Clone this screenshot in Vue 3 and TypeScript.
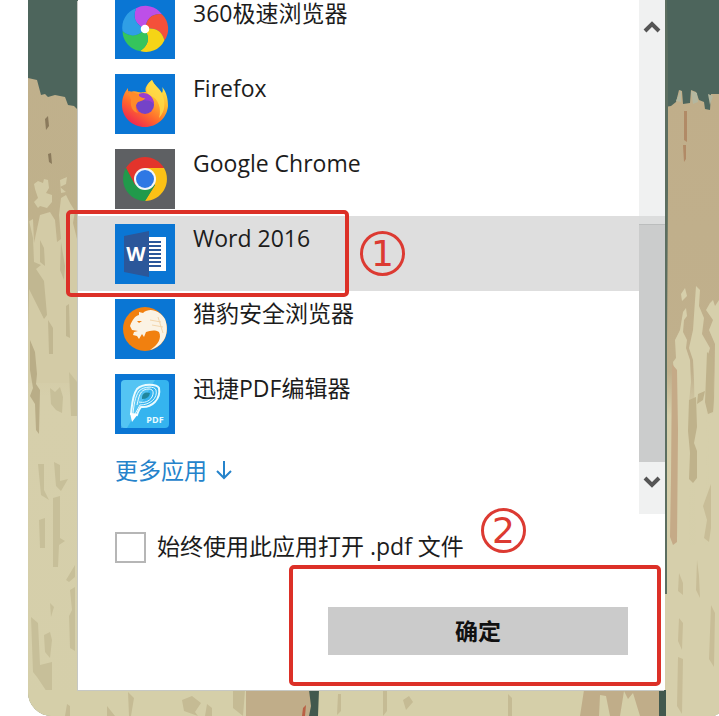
<script setup lang="ts">
import { ref } from 'vue'

type AppKind = 'swirl' | 'firefox' | 'chrome' | 'word' | 'cheetah' | 'pdf'

interface AppEntry {
  kind: AppKind
  name: string
}

const apps: AppEntry[] = [
  { kind: 'swirl', name: '360极速浏览器' },
  { kind: 'firefox', name: 'Firefox' },
  { kind: 'chrome', name: 'Google Chrome' },
  { kind: 'word', name: 'Word 2016' },
  { kind: 'cheetah', name: '猎豹安全浏览器' },
  { kind: 'pdf', name: '迅捷PDF编辑器' },
]

const petals = ['#bd4fe8', '#f4503a', '#f5d416', '#35c45c', '#2f9fe6']
const pageLines = [18, 22, 26, 30, 34, 38, 42]

const selected = ref<AppKind>('word')
const always = ref(false)
</script>

<template>
  <main class="stage">
    <svg class="scene" viewBox="28 0 691 716" preserveAspectRatio="xMidYMid slice" aria-hidden="true">
      <defs>
        <linearGradient id="wood" x1="0" y1="0" x2="0" y2="1">
          <stop offset="0" stop-color="#c0b08c" />
          <stop offset="0.22" stop-color="#bfb18b" />
          <stop offset="0.36" stop-color="#cdc39c" />
          <stop offset="0.5" stop-color="#d6cfab" />
          <stop offset="1" stop-color="#d5cfaa" />
        </linearGradient>
        <linearGradient id="plank" x1="0" y1="0" x2="0" y2="1">
          <stop offset="0" stop-color="#c0ae8a" />
          <stop offset="0.45" stop-color="#c0b08c" />
          <stop offset="0.52" stop-color="#d6cfab" />
          <stop offset="1" stop-color="#d5cfaa" />
        </linearGradient>
      </defs>
      <rect x="28" width="691" height="716" fill="#4d655c" />
      <path fill="url(#wood)" d="M28 78L37 80 41 95 45 94 48 97 55 95 65 97 68 105 74 106 78 110V716H28Z" />
      <path fill="#d3cba6" d="M34 184l4-3 5 2 1-4 4 1 1 8-3 5 6 2v7l-5 6-7-2-2 2-4-6 4-4-3-9zM60 180l7-3-1 7-6 3 6 5-5 1zM61 198l5-3 4 8 5 8-2 12 5 20v140H28V222l5-3 1 24 6-28 10-3 5 8 2 22 4-3-2-24z" />
      <path fill="#7d6d50" opacity="0.8" d="M45 119l3-3 1 10-3 4zM48 154l3-1 1 11-3-2z" />
      <g fill="#c1b791">
        <path d="M28 216l5 22 1 24 7 3-5 4 8 12 3 34-3 4-6-12-9-18-1 40z" />
        <path d="M40 240l4 8 1 18-5-4zM61 242l4 24-1 14-4-10zM66 306l3-2 1 34-4-2zM48 320l5 8v26h-4z" />
      </g>
      <path fill="#b9ad87" d="M30 340l5 12 2 22-1 10 4 6-1 44-3-4-1-26-5-8 3-8-3-18z" />
      <g fill="#c7bf99">
        <path d="M50 388l5 4 5-5 3 10-1 16-6-3-5-6zM69 372l8 10v34h-6zM38 464h6v26l5 10-8-5zM54 462l6 3v16l8-2-7 12-5-5z" />
        <path d="M53 498l7-2v42l5 3-6 4-1 22h-5zM39 520l6-2v30h-5zM66 580l9-15v12l-6 5zM70 590l5-3v64l-5-3-1-32 3-6z" />
        <path d="M31 617l7 6 2 42 12-3v36l-5-6-10-15-4-5zM44 635l6-3 2 8-2 18-5-6zM50 603l4 4-3 10z" />
      </g>
      <path fill="url(#plank)" d="M665 107l6-1 5-4 3-12 3 1 1 13 7-1 1-13 5 2 3 8 5 2 1 7 5 1 1-16h13V716H665Z" />
      <path fill="#b4b79f" d="M676 101l5-11v12zM691 91l6 2 1 9-5 2zM708 94l5 2-3 9z" />
      <path fill="#b18a66" d="M684 111h3v31l-3-2zM683 145h3v14l-2 3z" />
      <g fill="#d6cfab">
        <path d="M681 294l4-6 2 8-5 5zM683 312l3-4 1 8-3 4-1 12 4 8-1 8 4 12 1 22-2 20 1 316H677V400l-4-38 3-4-1-18 5-10z" />
        <path d="M696 286l4 4-1 16 5 12-2 16 8 14-3 10 4 10-5 12 1 18-3 320h-8V480l-2-100-1-20-4-12 4-18z" />
        <path d="M706 310l4-7 3-3 2 6 4-6V716h-13l3-288 5-18 1-66-6-14 4-10z" />
      </g>
      <path fill="#d6cfab" d="M665 545h54v171h-54z" />
      <path fill="#c5aa87" d="M672 364l5 6 1 60-1 112-4 3-3-8 1-60z" />
      <g fill="#bfb28b">
        <path d="M689 400l7-3 1 30-3 16 3 8v27l-4 5-4-4 1-26-2-22zM707 352l6 6 1 40-1 14-5 2-3-12zM698 394l7-3-2 9-6 4z" />
      </g>
      <g fill="#c8bd97">
        <path d="M711 484v44l-2 14-5-4 3-18-4-14zM679 573l4 10v12l-5-4zM697 560l2 16 1 22-4-8zM711 605l4 8-1 54-5-8zM679 618l4 5-1 27-4-9zM678 657l5 2-1 55-5-8z" />
      </g>
      <rect x="28" y="690" width="638" height="26" fill="#d5cfa9" />
      <g fill="#c5bb94">
        <path d="M67 704l3 2v10h-5zM107 706l8 10h-8zM182 700l10-4 9 7-6 9 3 4-14-5zM128 692l6 6-3 18h-2zM207 704l5 4v8h-7zM233 690h12l-2 26-10-8z" />
        <path d="M338 694h3v17l-4 4zM383 691h4v20l-4 5zM403 700l6-4 4 6-7 8zM508 694l4 4v18h-4z" />
      </g>
      <path fill="#c0ad89" d="M246 690h71v26h-71zM584 690h75v26h-79z" />
      <path fill="#d5cfa9" d="M600 695l6 1 4 20h-11zM624 691l4 8 5-6 7 23h-20z" />
      <path fill="#42594e" d="M309 690h10l-1 26h-9l2-10zM659 690h7v26h-7z" />
      <path fill="#b96146" d="M303 708l3-3-1 11h-3z" />
      <path fill="#5c6e60" d="M665 0h2l1 54v136l-1 154v250h-2z" />
    </svg>

    <form class="dialog" @submit.prevent>
      <div class="chooser">
        <div class="listing">
          <ul class="apps">
            <li v-for="app in apps" :key="app.kind" class="item">
              <button
                type="button"
                class="app"
                :class="{ active: app.kind === selected }"
                :aria-pressed="app.kind === selected"
                @click="selected = app.kind"
              >
                <span class="tile" :class="app.kind">
                  <svg viewBox="0 0 60 60" aria-hidden="true">
                    <g v-if="app.kind === 'swirl'" transform="translate(30 30) scale(1.06)">
                      <path
                        v-for="(color, i) in petals"
                        :key="color"
                        :fill="color"
                        :transform="`rotate(${i * 72})`"
                        d="M0 0Q-13.7-6.5-8.4-19.5A19 19 0 0 1 16-14Q2-15 0 0Z"
                      />
                      <circle r="4" fill="#fff" />
                    </g>
                    <g v-else-if="app.kind === 'firefox'">
                      <defs>
                        <linearGradient id="ffBody" x1="0.85" y1="0.05" x2="0.25" y2="0.95">
                          <stop offset="0" stop-color="#fff052" />
                          <stop offset="0.35" stop-color="#ffb52e" />
                          <stop offset="0.68" stop-color="#ff6a2c" />
                          <stop offset="1" stop-color="#f0284f" />
                        </linearGradient>
                      </defs>
                      <path fill="url(#ffBody)" d="M37 6C39 11 44 14 47 19C48 17 48 15 47 13C52 18 53 26 53 32C52 44 42 53 30 53C17 53 7 43 7 31C7 24 9 19 13 14C13 16 13 18 14 19C17 17 20 17 23 18C26 19 29 18 31 18C29 14 33 9 37 6Z" />
                      <path fill="#ffdc48" d="M37 6C39 11 44 14 47 20C51 28 50 38 44 44C47 35 43 24 36 22C31 20 29 13 37 6Z" opacity="0.8" />
                      <circle cx="30" cy="31" r="9" fill="#7443c8" />
                      <path fill="#9b3fd0" d="M24 20C31 17 39 22 39 30C35 25 30 27 23 25Z" />
                      <path fill="#ff8a2a" d="M13 17C17 17 20 20 24 20C23 22 26 24 30 24C29 27 25 27 23 28C20 31 20 35 23 39C17 38 15 31 16 26Z" />
                    </g>
                    <g v-else-if="app.kind === 'chrome'" transform="translate(30 30)">
                      <path fill="#e3342b" d="M-19-11A22 22 0 0 1 19-11H0L-10 6Z" />
                      <path fill="#fbc116" d="M19-11A22 22 0 0 1 0 22L10 6 0-11Z" />
                      <path fill="#219a4b" d="M0 22A22 22 0 0 1-19-11L-10 6H10Z" />
                      <circle r="11" fill="#f4f6f8" />
                      <circle r="9" fill="#2f78e4" />
                    </g>
                    <g v-else-if="app.kind === 'word'">
                      <path fill="#fff" d="M34 13H51V47H34Z" />
                      <path v-for="y in pageLines" :key="y" :d="`M34 ${y}H46`" stroke="#2b579a" stroke-width="2" />
                      <path fill="#2b579a" d="M9 12L34 7V53L9 48Z" />
                      <text x="21" y="37" class="letter">W</text>
                    </g>
                    <g v-else-if="app.kind === 'cheetah'">
                      <circle cx="30" cy="30" r="22" fill="#f1800f" />
                      <path fill="#fbf3e4" d="M15 27C17 21 20 17 24 16L24 13L28 14C35 8 45 12 50 20C55 33 50 47 35 51C43 46 47 39 44 33C39 30 35 32 31 33L29 38L27 35L24 40L22 37L18 36L19 33L23 32L17 31Z" />
                      <path fill="#f1800f" d="M22 22L27 22L24 24Z" />
                      <path fill="none" stroke="#f3d6ac" d="M35 21L46 23M37 26L48 28M43 18L48 34" />
                    </g>
                    <g v-else>
                      <rect x="6" y="6" width="48" height="48" rx="4" fill="#35b4ef" />
                      <path fill="#74d4f7" opacity="0.5" d="M6 54V10Q6 6 10 6H40L12 54Z" />
                      <g fill="none" stroke="#e9fbff">
                        <path stroke-width="2" d="M16 40C17 32 17 22 22 15C28 9 42 10 44 14C46 25 37 34 26 33C24 35 23 38 22 41Z" />
                        <path stroke-width="1" d="M18 39C19 31 20 23 24 17C29 12 40 12 41 16C43 24 35 31 25 31L20 40" />
                        <path stroke-width="1" d="M22 31C24 22 25 18 29 16C37 13 40 17 37 23C34 28 29 29 24 28" />
                      </g>
                      <path fill="#21869c" d="M27 23Q28 17 35 19Q34 25 27 25Z" />
                      <path fill="#fff" d="M15 39L23 40L17 48Z" />
                      <text x="40" y="49" class="tag">PDF</text>
                    </g>
                  </svg>
                </span>
                <span class="name">{{ app.name }}</span>
              </button>
              <template v-if="app.kind === 'word'">
                <span class="frame frame-row"></span>
                <span class="step step-one">1</span>
              </template>
            </li>
          </ul>
          <a href="#" class="more" @click.prevent>
            更多应用
            <svg viewBox="0 0 18 20" aria-hidden="true"><path d="M9 1V18M2 11L9 18L16 11" /></svg>
          </a>
        </div>
        <div class="scrollbar">
          <button type="button" class="arrow" aria-label="向上滚动">
            <svg viewBox="0 0 18 12" aria-hidden="true"><path d="M2 10L9 3L16 10" /></svg>
          </button>
          <div class="thumb"></div>
          <button type="button" class="arrow" aria-label="向下滚动">
            <svg viewBox="0 0 18 12" aria-hidden="true"><path d="M2 2L9 9L16 2" /></svg>
          </button>
        </div>
      </div>

      <div class="always">
        <input id="always" v-model="always" type="checkbox" />
        <label for="always">始终使用此应用打开 .pdf 文件</label>
        <span class="step step-two">2</span>
      </div>

      <div class="actions">
        <button type="submit" class="ok">确定</button>
        <span class="frame frame-ok"></span>
      </div>
    </form>
  </main>
</template>

<style>
body {
  margin: 0;
  background: #fff;
}
</style>

<style scoped>
.stage {
  position: relative;
  box-sizing: border-box;
  margin-left: 28px;
  padding: 0 54px 26px 50px;
  overflow: hidden;
  border-radius: 0 0 8px 24px / 0 0 4px 24px;
  font-family: "Open Sans", "Noto Sans CJK SC", sans-serif;
  font-size: 23px;
  line-height: 28px;
  color: #1c1c1c;
}

.scene {
  position: absolute;
  inset: 0;
  width: 100%;
  height: 100%;
}

.dialog {
  position: relative;
  background: #fff;
  box-shadow: -1px 1px 0 #c6c8c4;
}

.chooser {
  display: flex;
}

.listing {
  flex: 1;
  min-width: 0;
}

.apps {
  margin: -9px 0 0;
  padding: 0;
  list-style: none;
}

.item {
  position: relative;
}

.app {
  display: flex;
  align-items: flex-start;
  gap: 18px;
  width: 100%;
  padding: 8px 0 7px 37px;
  border: 0;
  background: none;
  font: inherit;
  color: inherit;
  text-align: left;
}

.app.active {
  background: #dedede;
}

.tile {
  width: 60px;
  height: 60px;
  background: #0a76d4;
}

.tile.chrome {
  background: #5e6063;
}

.tile svg {
  display: block;
}

.letter {
  fill: #fff;
  font: bold 20px "Open Sans", sans-serif;
  text-anchor: middle;
}

.tag {
  fill: #e9fbff;
  font: bold 9px "Open Sans", sans-serif;
  text-anchor: middle;
}

.more {
  display: inline-flex;
  align-items: center;
  gap: 8px;
  margin: 15px 0 0 37px;
  color: #2583cb;
  text-decoration: none;
}

.more svg {
  width: 18px;
  height: 20px;
  fill: none;
  stroke: currentColor;
  stroke-width: 2;
}

.scrollbar {
  display: flex;
  flex-direction: column;
  width: 26px;
  height: 514px;
  background: #f0f1f1;
}

.arrow {
  display: flex;
  align-items: center;
  justify-content: center;
  height: 52px;
  padding: 0 0 12px;
  border: 0;
  background: none;
}

.arrow:first-child {
  padding: 2px 0 0;
}

.arrow svg {
  width: 18px;
  height: 12px;
  fill: none;
  stroke: #555;
  stroke-width: 4;
}

.thumb {
  flex: 1;
  margin-top: 172px;
  background: #cbcccc;
  border-top: 1px solid #bbbdbd;
  box-shadow: 0 -8px 0 #dcdddd;
}

.always {
  display: flex;
  align-items: flex-start;
  gap: 11px;
  padding: 18px 0 0 37px;
}

.always input {
  appearance: none;
  box-sizing: border-box;
  width: 31px;
  height: 31px;
  margin: 0;
  border: 2px solid #b6b6b6;
  background: #fff;
}

.always input:checked {
  background: #0a76d4;
}

.actions {
  position: relative;
  display: flex;
  justify-content: flex-end;
  padding: 44px 37px 35px;
}

.ok {
  width: 300px;
  height: 48px;
  padding: 0;
  border: 0;
  background: #cbcbcb;
  font: inherit;
  font-weight: bold;
  color: #111;
}

.frame {
  position: absolute;
  z-index: 1;
  box-sizing: border-box;
  border: 4px solid #dc3027;
  border-radius: 5px;
  pointer-events: none;
}

.frame-row {
  top: -6px;
  left: -12px;
  width: 283px;
  height: 87px;
}

.frame-ok {
  top: 2px;
  right: 4px;
  width: 372px;
  height: 121px;
}

.step {
  display: flex;
  align-items: center;
  justify-content: center;
  box-sizing: border-box;
  width: 45px;
  height: 45px;
  border: 3px solid #dc3a32;
  border-radius: 50%;
  font-family: "DejaVu Sans", sans-serif;
  font-size: 36px;
  line-height: 36px;
  color: #dc3a32;
}

.step-one {
  position: absolute;
  top: 15px;
  left: 282px;
}

.step-two {
  position: absolute;
  top: 508px;
  left: 403px;
}
</style>
